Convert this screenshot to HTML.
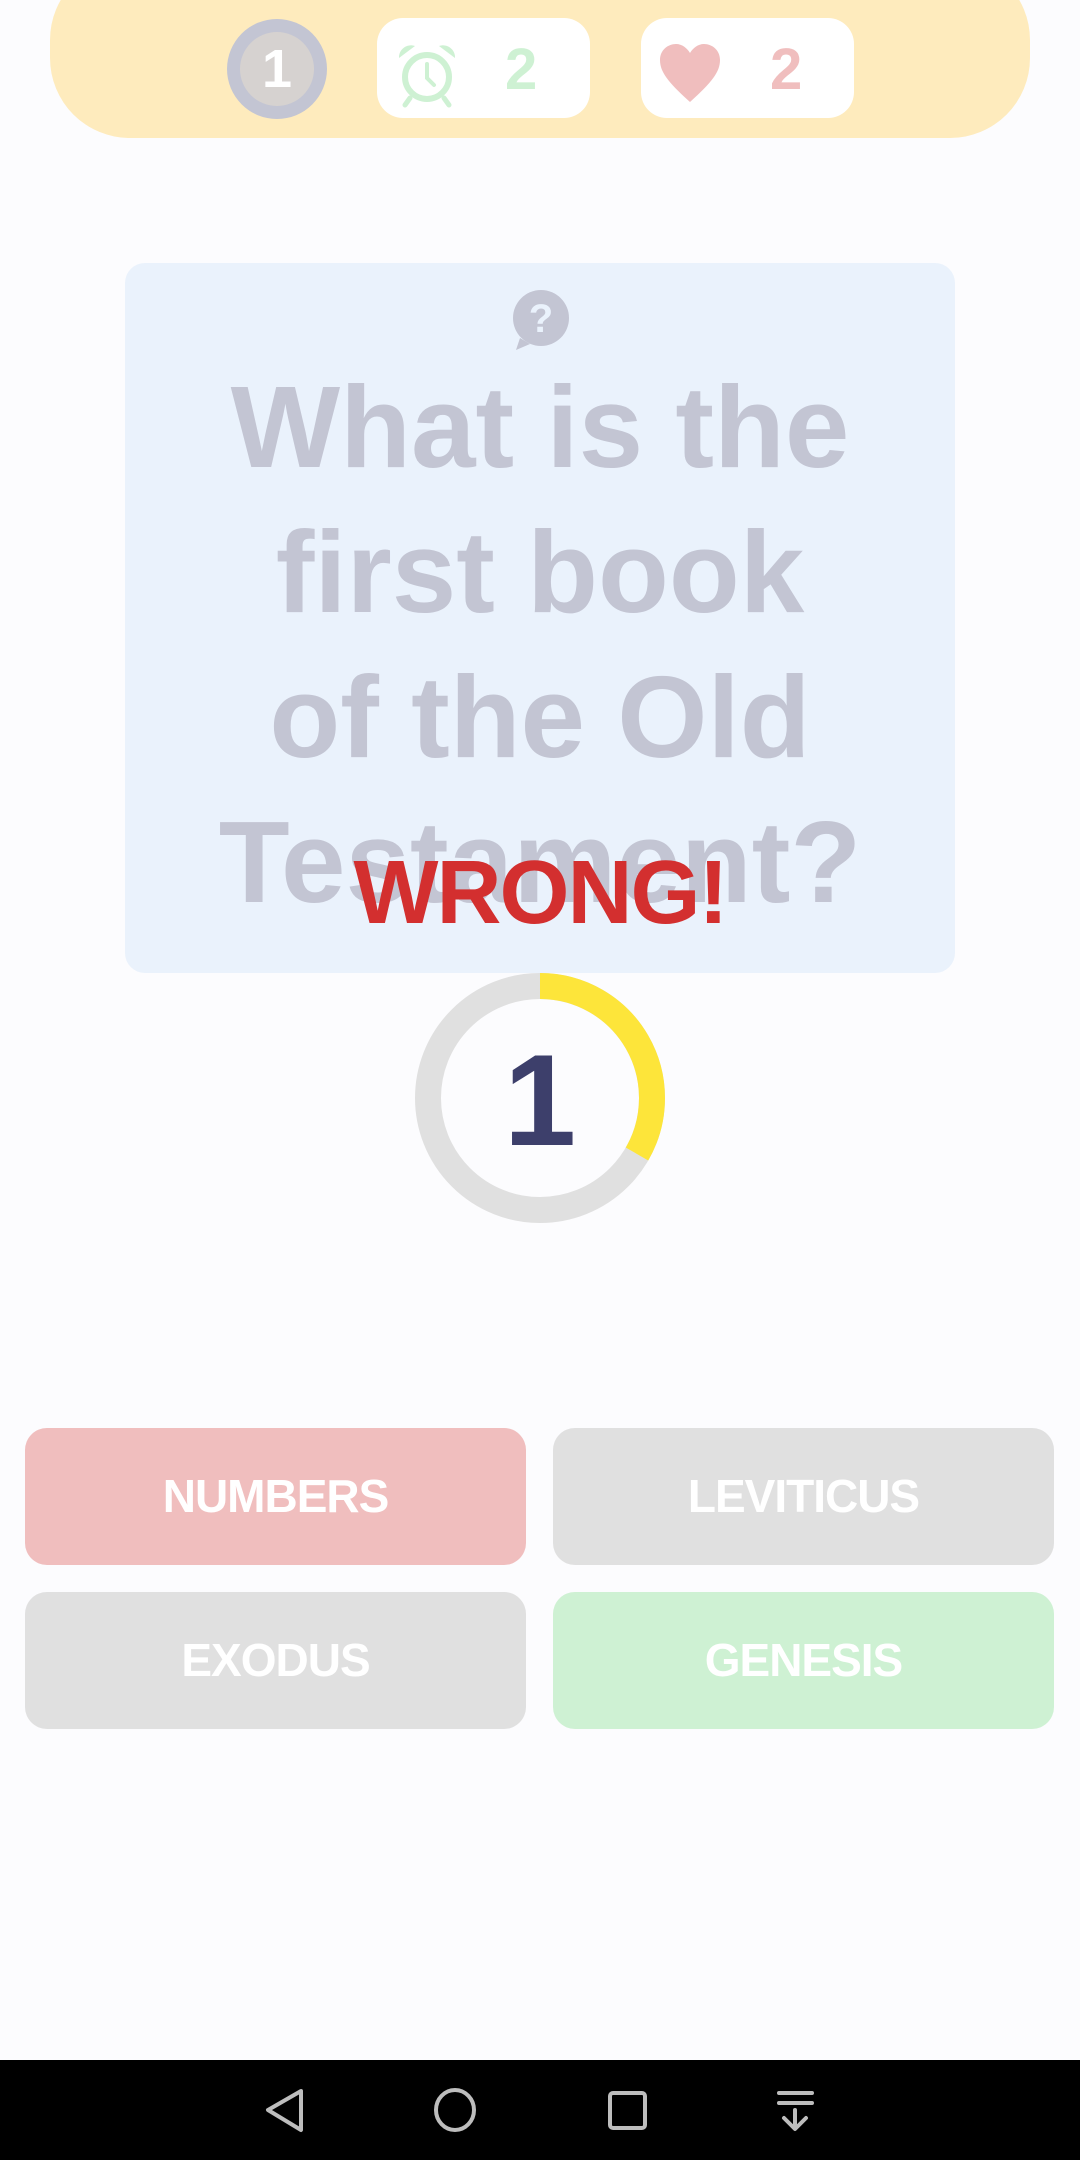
<!DOCTYPE html>
<html><head><meta charset="utf-8"><style>
*{margin:0;padding:0;box-sizing:border-box}
body{width:1080px;height:2160px;background:#fcfcfe;position:relative;overflow:hidden;font-family:"Liberation Sans",sans-serif;font-weight:bold}
.abs{position:absolute}
.banner{left:50px;top:-40px;width:980px;height:178px;background:#feebbd;border-radius:80px}
.pill{top:18px;width:213px;height:100px;background:#fff;border-radius:26px}
.q{left:125px;top:263px;width:830px;height:710px;background:#eaf2fc;border-radius:20px}
.qt{left:125px;width:830px;text-align:center;color:#c3c5d3;font-size:116px;line-height:145px;top:355px}
.btn{width:501px;height:137px;border-radius:22px;color:#fff;font-size:46px;text-align:center;line-height:137px;letter-spacing:-1px}
</style></head><body>
<div class="abs banner"></div>
<div class="abs" style="left:227px;top:19px;width:100px;height:100px;border-radius:50%;background:#c3c5d3"></div>
<div class="abs" style="left:240px;top:32px;width:74px;height:74px;border-radius:50%;background:#d6d2d0;color:#fff;font-size:54px;line-height:74px;text-align:center">1</div>
<div class="abs pill" style="left:377px"></div>
<svg class="abs" style="left:395px;top:40px" width="64" height="68" viewBox="0 0 64 68">
<circle cx="32" cy="37" r="22" fill="none" stroke="#cef1d3" stroke-width="6"/>
<path d="M32 24v14l7 7" fill="none" stroke="#cef1d3" stroke-width="4" stroke-linecap="round"/>
<path d="M4 18a12 12 0 0 1 16-12z M60 18a12 12 0 0 0-16-12z" fill="#cef1d3"/>
<path d="M15 58l-5 7 M49 58l5 7" stroke="#cef1d3" stroke-width="5" stroke-linecap="round"/>
</svg>
<div class="abs" style="left:505px;top:36px;color:#cef1d3;font-size:58px">2</div>
<div class="abs pill" style="left:641px"></div>
<svg class="abs" style="left:658px;top:44px" width="64" height="60" viewBox="0 0 64 60"><path d="M32 58C10 38 2 28 2 16 2 6 10 0 18 0c6 0 11 4 14 9 3-5 8-9 14-9 8 0 16 6 16 16 0 12-8 22-30 42z" fill="#f0bebe"/></svg>
<div class="abs" style="left:770px;top:36px;color:#f0bebe;font-size:58px">2</div>

<div class="abs q"></div>
<svg class="abs" style="left:508px;top:288px" width="64" height="64" viewBox="0 0 64 64"><circle cx="33" cy="30" r="28" fill="#c3c5d3"/><path d="M12 50l-4 12 14-6z" fill="#c3c5d3"/><text x="33" y="44" font-size="40" font-family="Liberation Sans" font-weight="bold" fill="#eaf2fc" text-anchor="middle">?</text></svg>
<div class="abs qt">What is the<br>first book<br>of the Old<br>Testament?</div>
<div class="abs" style="left:0;width:1080px;top:842px;text-align:center;color:#d32f2f;font-size:90px;letter-spacing:-2px">WRONG!</div>

<svg class="abs" style="left:410px;top:968px" width="260" height="260" viewBox="0 0 260 260">
<circle cx="130" cy="130" r="112" fill="none" stroke="#e0e0e0" stroke-width="26"/>
<path d="M130 18A112 112 0 0 1 227 186" fill="none" stroke="#fde53a" stroke-width="26"/>
</svg>
<div class="abs" style="left:440px;width:200px;top:1030px;text-align:center;color:#3d3f6b;font-size:130px;line-height:140px">1</div>

<div class="abs btn" style="left:25px;top:1428px;background:#f0bebe">NUMBERS</div>
<div class="abs btn" style="left:553px;top:1428px;background:#e0e0e0">LEVITICUS</div>
<div class="abs btn" style="left:25px;top:1592px;background:#e0e0e0">EXODUS</div>
<div class="abs btn" style="left:553px;top:1592px;background:#cef1d3">GENESIS</div>

<div class="abs" style="left:0;top:2060px;width:1080px;height:100px;background:#000"></div>
<svg class="abs" style="left:0;top:2060px" width="1080" height="100" viewBox="0 0 1080 100" fill="none" stroke="#bdbdbd" stroke-width="4" stroke-linejoin="round" stroke-linecap="round">
<path d="M301 31L268 50L301 70Z"/>
<ellipse cx="455" cy="50" rx="19" ry="20"/>
<rect x="610" y="33" width="35" height="35" rx="3"/>
<path d="M779 33h33 M779 43h33 M795 50v18 M784 58l11 11 11-11"/>
</svg>
</body></html>
